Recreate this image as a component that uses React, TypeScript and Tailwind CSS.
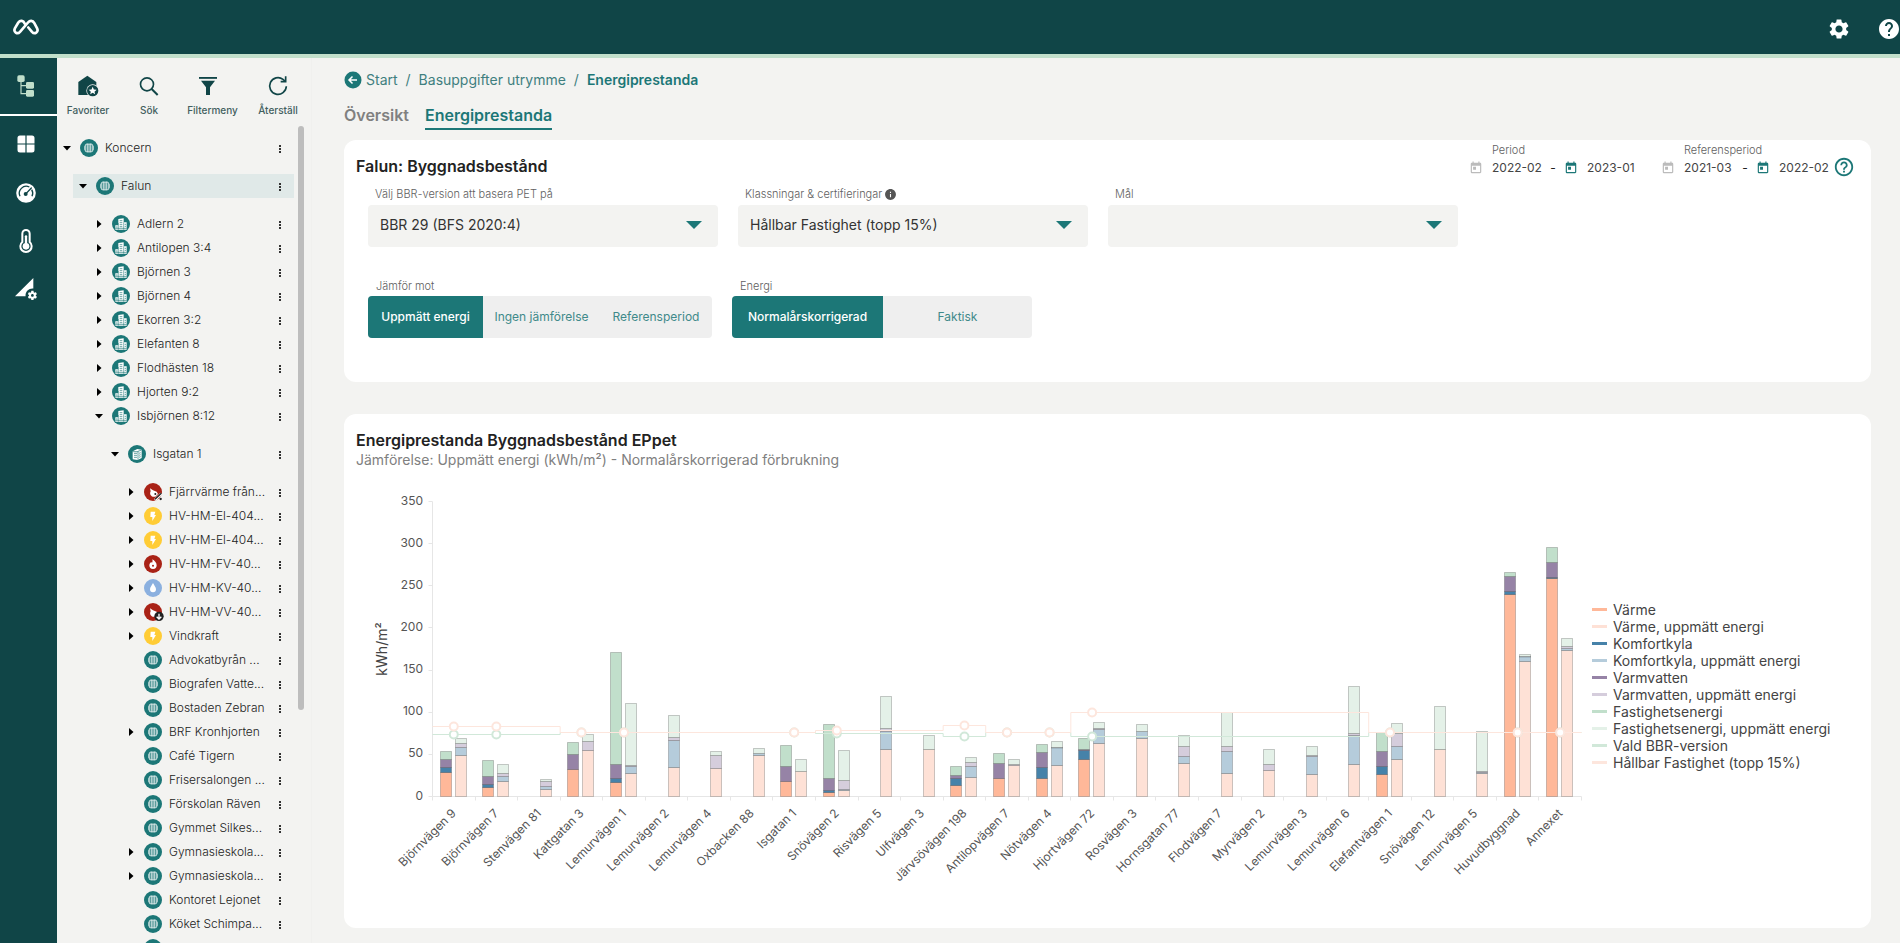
import React from 'react';
import { MdSettings, MdHelp, MdToday, MdPermDataSetting, MdInfo, MdHelpOutline } from 'react-icons/md';

type IconKind = 'globe' | 'estate' | 'building' | 'heatShare' | 'power' | 'heat' | 'water' | 'heatDown';

interface TreeItem {
  name: string;
  icon: IconKind;
  open?: boolean;
  leaf?: boolean;
  selected?: boolean;
  children?: TreeItem[];
}

interface Building {
  name: string;
  // stacked levels in kWh/m²: heat, cooling, hot water, property energy
  corrected?: number[];
  measured: number[];
}

const isgatan: TreeItem[] = [
  { name: 'Fjärrvärme från...', icon: 'heatShare' },
  { name: 'HV-HM-El-404...', icon: 'power' },
  { name: 'HV-HM-El-404...', icon: 'power' },
  { name: 'HV-HM-FV-40...', icon: 'heat' },
  { name: 'HV-HM-KV-40...', icon: 'water' },
  { name: 'HV-HM-VV-40...', icon: 'heatDown' },
  { name: 'Vindkraft', icon: 'power' },
  { name: 'Advokatbyrån ...', icon: 'globe', leaf: true },
  { name: 'Biografen Vatte...', icon: 'globe', leaf: true },
  { name: 'Bostaden Zebran', icon: 'globe', leaf: true },
  { name: 'BRF Kronhjorten', icon: 'globe' },
  { name: 'Café Tigern', icon: 'globe', leaf: true },
  { name: 'Frisersalongen ...', icon: 'globe', leaf: true },
  { name: 'Förskolan Räven', icon: 'globe', leaf: true },
  { name: 'Gymmet Silkes...', icon: 'globe', leaf: true },
  { name: 'Gymnasieskola...', icon: 'globe' },
  { name: 'Gymnasieskola...', icon: 'globe' },
  { name: 'Kontoret Lejonet', icon: 'globe', leaf: true },
  { name: 'Köket Schimpa...', icon: 'globe', leaf: true },
  { name: '', icon: 'globe', leaf: true },
];

const tree: TreeItem[] = [
  {
    name: 'Koncern',
    icon: 'globe',
    open: true,
    children: [
      {
        name: 'Falun',
        icon: 'globe',
        open: true,
        selected: true,
        children: [
          { name: 'Adlern 2', icon: 'estate' },
          { name: 'Antilopen 3:4', icon: 'estate' },
          { name: 'Björnen 3', icon: 'estate' },
          { name: 'Björnen 4', icon: 'estate' },
          { name: 'Ekorren 3:2', icon: 'estate' },
          { name: 'Elefanten 8', icon: 'estate' },
          { name: 'Flodhästen 18', icon: 'estate' },
          { name: 'Hjorten 9:2', icon: 'estate' },
          {
            name: 'Isbjörnen 8:12',
            icon: 'estate',
            open: true,
            children: [{ name: 'Isgatan 1', icon: 'building', open: true, children: isgatan }],
          },
        ],
      },
    ],
  },
];

const buildings: Building[] = [
  { name: 'Björnvägen 9', corrected: [28, 34, 43.5, 53.4], measured: [48.6, 58, 63, 69] },
  { name: 'Björnvägen 7', corrected: [10.7, 13.8, 23.3, 42.7], measured: [17.8, 23.3, 27.3, 38] },
  { name: 'Stenvägen 81', measured: [8.3, 11.5, 17.8, 20.2] },
  { name: 'Kattgatan 3', corrected: [32, 32, 49.4, 64], measured: [54.6, 54.6, 65, 73.5] },
  { name: 'Lemurvägen 1', corrected: [16.6, 21, 37.6, 170.8], measured: [27.3, 35.6, 36.8, 110.3] },
  { name: 'Lemurvägen 2', measured: [34.4, 66.4, 70, 96] },
  { name: 'Lemurvägen 4', measured: [33.2, 33.2, 48.6, 53.4] },
  { name: 'Oxbacken 88', measured: [48.6, 51, 51, 57] },
  { name: 'Isgatan 1', corrected: [17.8, 17.8, 35.2, 60.5], measured: [29.7, 29.7, 29.7, 43.9] },
  { name: 'Snövägen 2', corrected: [4.7, 6.7, 21, 85.4], measured: [7.1, 8.3, 19, 54.6] },
  { name: 'Risvägen 5', measured: [55.8, 77.5, 80.3, 118.6] },
  { name: 'Ulfvägen 3', measured: [55.8, 55.8, 55.8, 72.4] },
  { name: 'Järvsövägen 198', corrected: [13, 21.4, 24.5, 35.6], measured: [22.5, 35.6, 40.3, 46.3] },
  { name: 'Antilopvägen 7', corrected: [21, 21, 38.8, 51], measured: [36.8, 36.8, 37.6, 43.9] },
  { name: 'Nötvägen 4', corrected: [21, 34.4, 51.8, 61.7], measured: [36.8, 58, 58.6, 65.2] },
  { name: 'Hjortvägen 72', corrected: [43.9, 54.6, 55.4, 68.8], measured: [62.9, 79.5, 80.3, 87.8] },
  { name: 'Rosvägen 3', measured: [68.8, 77.1, 77.1, 85.4] },
  { name: 'Hornsgatan 77', measured: [38.8, 47.4, 59.3, 72.4] },
  { name: 'Flodvägen 7', measured: [27.3, 53.4, 59.3, 99.6] },
  { name: 'Myrvägen 2', measured: [30.8, 30.8, 38, 55.8] },
  { name: 'Lemurvägen 3', measured: [26.1, 47.4, 48.2, 59.3] },
  { name: 'Lemurvägen 6', measured: [38, 72.4, 74.7, 130.5] },
  { name: 'Elefantvägen 1', corrected: [26.1, 35.6, 53.4, 75.9], measured: [43.9, 59.3, 74.7, 86.6] },
  { name: 'Snövägen 12', measured: [55.8, 55.8, 55.8, 106.8] },
  { name: 'Lemurvägen 5', measured: [27.3, 28.5, 29.7, 77.1] },
  { name: 'Huvudbyggnad', corrected: [239.6, 243.2, 260.6, 265.7], measured: [160.1, 166, 166.6, 168.4] },
  { name: 'Annexet', corrected: [258.2, 259.4, 277.2, 295.4], measured: [173.2, 176, 178, 187.4] },
];

// [number of buildings, level]
const bbrSteps: [number, number][] = [[3, 73.5], [6, 76], [3, 75], [1, 71.6], [2, 76], [7, 71.2], [5, 76]];
const sustainableSteps: [number, number][] = [[3, 83], [6, 76.3], [3, 78.7], [1, 84.2], [2, 76.3], [7, 99.2], [5, 76.3]];

const correctedColors = ['#ffb899', '#4682a9', '#9683a6', '#c1dfcb'];
const measuredColors = ['#fee1d6', '#b5ccdb', '#d5cddc', '#e4f1e8'];

const legend = [
  { label: 'Värme', color: 'bg-[#ffb899]' },
  { label: 'Värme, uppmätt energi', color: 'bg-[#fee1d6]' },
  { label: 'Komfortkyla', color: 'bg-[#4682a9]' },
  { label: 'Komfortkyla, uppmätt energi', color: 'bg-[#b5ccdb]' },
  { label: 'Varmvatten', color: 'bg-[#9683a6]' },
  { label: 'Varmvatten, uppmätt energi', color: 'bg-[#d5cddc]' },
  { label: 'Fastighetsenergi', color: 'bg-[#c1dfcb]' },
  { label: 'Fastighetsenergi, uppmätt energi', color: 'bg-[#e4f1e8]' },
  { label: 'Vald BBR-version', color: 'bg-[#d1e8d9]' },
  { label: 'Hållbar Fastighet (topp 15%)', color: 'bg-[#fde6dd]' },
];

const Logo = () => (
  <svg className="h-4 w-[26px]" viewBox="0 0 78 47" fill="none" stroke="#fff" strokeWidth="8" strokeLinecap="round" strokeLinejoin="round">
    <path d="M35 13C31 4 22 2 16 10L6 27C0 39 13 47 21 38L45 10C51 3 59 3 64 12L72 27C78 39 65 47 57 38L46 25" />
  </svg>
);

const TreeNavIcon = () => (
  <svg className="h-[22px] w-[18px]" viewBox="0 0 54 66" fill="#c1dfcb">
    <rect x="1" y="1" width="22" height="20" rx="5" />
    <rect x="27" y="21" width="24" height="20" rx="4" />
    <rect x="27" y="45" width="24" height="20" rx="4" />
    <path d="M12 20V56H29M12 32H29" fill="none" stroke="#c1dfcb" strokeWidth="3.5" />
  </svg>
);

const GridNavIcon = () => (
  <svg className="h-[18px] w-[18px]" viewBox="0 0 18 18" fill="#fff">
    <path d="M3 .5H8.400V8.400H.5V3A2.500 2.500 0 0 1 3 .5ZM9.600 .5H15A2.500 2.500 0 0 1 17.500 3V8.400H9.600ZM.5 9.600H8.400V17.500H3A2.500 2.500 0 0 1 .5 15ZM9.600 9.600H17.500V15A2.500 2.500 0 0 1 15 17.500H9.600Z" />
  </svg>
);

const GaugeNavIcon = () => (
  <svg className="h-5 w-5" viewBox="0 0 60 60" fill="none">
    <circle cx="30" cy="30" r="29.500" fill="#fff" />
    <path d="M12 40A21 21 0 0 1 40 12M47 20A21 21 0 0 1 48 40" stroke="#104547" strokeWidth="4" />
    <path d="M30 32L46 15" stroke="#104547" strokeWidth="4" strokeLinecap="round" />
    <circle cx="29" cy="33" r="6" fill="#104547" />
  </svg>
);

const ThermometerNavIcon = () => (
  <svg className="h-6 w-[14px]" viewBox="0 0 42 72" fill="none">
    <path d="M10 14A11 11 0 0 1 32 14V39A17 17 0 1 1 10 39Z" stroke="#fff" strokeWidth="6" />
    <path d="M21 22V50" stroke="#fff" strokeWidth="7" strokeLinecap="round" />
    <circle cx="21" cy="52" r="10" fill="#fff" />
  </svg>
);

const FavouriteIcon = () => (
  <svg className="h-[22px] w-[22px]" viewBox="0 0 66 66">
    <path d="M4 21L31 2L58 21V60H4Z" fill="#104547" />
    <circle cx="47" cy="47" r="19" fill="#f3f3f1" />
    <circle cx="47" cy="47" r="17" fill="#104547" />
    <path d="M47 35L50.500 43.500L59 44.500L52.500 50L54.500 58L47 53.500L39.500 58L41.500 50L35 44.500L43.500 43.500Z" fill="#fff" />
  </svg>
);

const SearchIcon = () => (
  <svg className="h-[22px] w-[22px]" viewBox="0 0 66 66" fill="none" stroke="#104547" strokeWidth="5">
    <circle cx="27" cy="28" r="19.500" />
    <path d="M41 42L59 60" strokeWidth="6" />
  </svg>
);

// the funnel sits left of the middle of its label
const FilterIcon = () => (
  <svg className="h-[22px] w-8" viewBox="0 0 96 66" fill="#104547">
    <rect x="6" y="6" width="54" height="5.500" />
    <path d="M12 17H54L39 37V60H27V37Z" />
  </svg>
);

const ResetIcon = () => (
  <svg className="h-[22px] w-[22px]" viewBox="0 0 66 66" fill="none" stroke="#104547" strokeWidth="5">
    <path d="M58 34A25 25 0 1 1 48 13L55 19" />
    <path d="M56 4V20H41" />
  </svg>
);

const nodeColors: Record<IconKind, string> = {
  globe: '#1c7777',
  estate: '#1c7777',
  building: '#1c7777',
  heatShare: '#a92216',
  heat: '#a92216',
  heatDown: '#a92216',
  power: '#ffcc35',
  water: '#8bb0df',
};

const NodeIcon = ({ kind }: { kind: IconKind }) => (
  <svg className="h-[18px] w-[18px] shrink-0 overflow-visible" viewBox="0 0 54 54">
    <circle cx="27" cy="27" r="27" fill={nodeColors[kind]} />
    {kind === 'globe' && (
      <g>
        <circle cx="27" cy="27" r="15" fill="#fff" />
        <g fill="none" stroke="#1c7777" strokeWidth="2">
          <ellipse cx="27" cy="27" rx="8" ry="15" />
          <path d="M27 12V42M13 21H41M12 27H42M13 33H41" />
        </g>
      </g>
    )}
    {kind === 'estate' && (
      <g>
        <path d="M19 12L35 10V44H19ZM35 22H44V44H35ZM10 31H19V44H10Z" fill="#fff" />
        <path d="M23 17H31M23 23H31M23 29H31M23 35H31M38 28H42M38 34H42M12 36H17M10 40H44" stroke="#1c7777" strokeWidth="2" />
        <path d="M19 24V44M35 22V44" stroke="#1c7777" strokeWidth="1.500" />
      </g>
    )}
    {kind === 'building' && (
      <g>
        <path d="M14 19L28 12L41 14V39L29 45L14 43Z" fill="#fff" />
        <path d="M30 19V44M30 19L41 15M14 20L30 20M18 25H27M18 31H27M18 37H27M33 25L38 23M33 31L38 29M33 37L38 35" stroke="#1c7777" strokeWidth="2" />
      </g>
    )}
    {kind === 'power' && <path d="M20 14H34L31 24H36L25 42V30H19Z" fill="#fff" />}
    {kind === 'water' && <path d="M27 12C31 20 36 25 36 31A9 9 0 0 1 18 31C18 25 23 20 27 12Z" fill="#fff" />}
    {kind === 'heat' && (
      <g>
        <path d="M25 13C31 17 38 23 38 31A11 11 0 0 1 16 31C16 26 19 22 22 21L24 24C26 21 26 17 25 13Z" fill="#fff" />
        <circle cx="27" cy="32" r="3" fill="#a92216" />
      </g>
    )}
    {(kind === 'heatShare' || kind === 'heatDown') && (
      <path d="M18 16L27 22L38 26L42 33L34 41H26C18 38 17 30 20 25Z" fill="#fff" />
    )}
    {kind === 'heatShare' && (
      <g>
        <path d="M33 51L52 32" stroke="#fff" strokeWidth="8" />
        <path d="M33 49L52 31" stroke="#222" strokeWidth="4" />
        <circle cx="34" cy="33" r="3" fill="#222" />
        <circle cx="50" cy="48" r="3.500" fill="#222" />
      </g>
    )}
    {kind === 'heatDown' && (
      <g>
        <circle cx="45" cy="40" r="14" fill="#222" />
        <path d="M45 32V47M38 41L45 48L52 41" fill="none" stroke="#fff" strokeWidth="4" />
      </g>
    )}
  </svg>
);

const Caret = ({ open }: { open?: boolean }) => (
  <svg className="h-2 w-2" viewBox="0 0 8 8" fill="#000">
    {open ? <path d="M0 2H8L4 6.500Z" /> : <path d="M2 0L6.500 4L2 8Z" />}
  </svg>
);

const TreeNode = ({ item }: { item: TreeItem }) => (
  <li>
    <div className={item.selected ? 'flex h-6 items-center bg-[#e0e9e8] pl-1' : 'flex h-6 items-center pl-1'}>
      <button type="button" aria-label={`Visa ${item.name}`} className="flex w-3 shrink-0 justify-center">
        {!item.leaf && <Caret open={item.open} />}
      </button>
      <a href="#" className="ml-[7px] flex min-w-0 flex-1 items-center gap-[7px] text-xs font-light text-[#222]">
        <NodeIcon kind={item.icon} />
        <span className="whitespace-nowrap">{item.name}</span>
      </a>
      <button type="button" aria-label={`Meny ${item.name}`} className="mr-2 flex w-3 shrink-0 justify-center pt-0.5">
        <svg className="h-2 w-0.5" viewBox="0 0 2 8" fill="#333">
          <path d="M0 0H2V2H0ZM0 3H2V5H0ZM0 6H2V8H0Z" />
        </svg>
      </button>
    </div>
    {item.children && (
      <ul className="pt-[14px] pl-4">
        {item.children.map((child, i) => (
          <TreeNode key={i} item={child} />
        ))}
      </ul>
    )}
  </li>
);

const ToolButton = ({ label, children }: { label: string; children: React.ReactNode }) => (
  <button type="button" className="flex flex-col items-center gap-[5px] text-[10px] leading-4 font-medium text-[#42605f]">
    {children}
    {label}
  </button>
);

const SelectField = ({ id, label, value, info }: { id: string; label: string; value: string; info?: boolean }) => (
  <div className="flex max-w-[350px] flex-1 flex-col gap-[3px]">
    <label htmlFor={id} className="flex items-center gap-0.5 pl-[7px] text-[11px] leading-4 font-light text-[#606060]">
      {label}
      {info && <MdInfo className="h-[13px] w-[13px] text-[#555]" />}
    </label>
    <div className="relative">
      <select id={id} defaultValue={value} className="h-[42px] w-full appearance-none rounded bg-[#f3f3f1] pr-10 pb-0.5 pl-3 text-sm text-[#333]">
        <option value={value}>{value}</option>
      </select>
      <svg className="pointer-events-none absolute top-4 right-4 h-2 w-4" viewBox="0 0 16 8" fill="#1c7777">
        <path d="M0 0H16L8 8Z" />
      </svg>
    </div>
  </div>
);

const DateField = ({ label, value, disabled }: { label: string; value: string; disabled?: boolean }) => (
  <div className="flex items-center gap-[9px]">
    <MdToday className={disabled ? 'h-[14px] w-[14px] text-[#bbb]' : 'h-[14px] w-[14px] text-[#1c7777]'} />
    <input type="text" aria-label={label} defaultValue={value} className="h-4 w-[50px] bg-transparent text-xs text-[#444]" />
  </div>
);

const PeriodField = ({ label, from, to }: { label: string; from: string; to: string }) => (
  <fieldset>
    <legend className="pl-[23px] text-[11px] leading-4 font-light text-[#606060]">{label}</legend>
    <div className="mt-0.5 flex items-center text-xs">
      <DateField label={`${label} från`} value={from} disabled />
      <span className="w-[22px] text-center leading-4">-</span>
      <DateField label={`${label} till`} value={to} />
    </div>
  </fieldset>
);

const PLOT = { left: 76.5, right: 1225.5, top: 21.5, bottom: 316.5 };
const band = (PLOT.right - PLOT.left) / buildings.length;
const yOf = (v: number) => PLOT.bottom - (v / 350) * (PLOT.bottom - PLOT.top);
const snap = (v: number) => Math.floor(yOf(v)) + 0.5;
const center = (i: number) => PLOT.left + band * (i + 0.5);

const Stack = ({ x, levels, colors }: { x: number; levels: number[]; colors: string[] }) => (
  <g stroke="#000" strokeOpacity="0.2">
    {levels.map((level, i) => {
      const base = i === 0 ? 0 : levels[i - 1];
      if (level <= base) return null;
      const top = snap(level);
      const bottom = snap(base);
      return <rect key={i} x={x} y={top} width={11} height={Math.max(bottom - top, 0.5)} fill={colors[i]} />;
    })}
  </g>
);

const stepPath = (steps: [number, number][]) => {
  let x = PLOT.left;
  let d = '';
  steps.forEach(([count, level], i) => {
    const y = snap(level);
    d += i === 0 ? `M${x} ${y}` : `V${y}`;
    x += count * band;
    d += `H${x}`;
  });
  return d;
};

const levelAt = (steps: [number, number][], index: number) => {
  let n = 0;
  for (const [count, level] of steps) {
    n += count;
    if (index < n) return level;
  }
  return 0;
};

const StepLine = ({ steps, color }: { steps: [number, number][]; color: string }) => (
  <g stroke={color} fill="none">
    <path d={stepPath(steps)} strokeWidth="1" />
    {buildings.map((b, i) =>
      b.corrected ? (
        <circle key={i} cx={center(i)} cy={snap(levelAt(steps, i))} r="4" fill="#fff" strokeWidth="2" />
      ) : null
    )}
  </g>
);

const EnergyChart = () => (
  <svg className="h-auto min-w-0 flex-1 self-start" viewBox="0 0 1228 436" role="img" aria-label="Energiprestanda per byggnad">
    <g stroke="#e6e6e6">
      <path d={`M${PLOT.left} ${PLOT.top}V${PLOT.bottom}H${PLOT.right}`} fill="none" />
      {[0, 50, 100, 150, 200, 250, 300, 350].map((v) => (
        <path key={v} d={`M${PLOT.left - 4} ${snap(v)}H${PLOT.left}`} />
      ))}
      {Array.from({ length: buildings.length + 1 }, (_, i) => (
        <path key={i} d={`M${Math.floor(PLOT.left + band * i) + 0.5} ${PLOT.bottom}V${PLOT.bottom + 4}`} />
      ))}
    </g>
    <g fontSize="12" fill="#555" textAnchor="end">
      {[0, 50, 100, 150, 200, 250, 300, 350].map((v) => (
        <text key={v} x="67" y={Math.round(yOf(v)) + 3}>
          {v}
        </text>
      ))}
      {buildings.map((b, i) => (
        <text key={i} transform={`translate(${center(i) + 3} 334) rotate(-45)`}>
          {b.name}
        </text>
      ))}
    </g>
    <text transform="translate(31 169) rotate(-90)" fontSize="14" fill="#444" textAnchor="middle">
      kWh/m²
    </text>
    {buildings.map((b, i) => {
      const x = Math.round(center(i) - 14) + 0.5;
      return (
        <g key={i}>
          {b.corrected && <Stack x={x} levels={b.corrected} colors={correctedColors} />}
          <Stack x={x + 15} levels={b.measured} colors={measuredColors} />
        </g>
      );
    })}
    <StepLine steps={bbrSteps} color="#d1e8d9" />
    <StepLine steps={sustainableSteps} color="#fde6dd" />
  </svg>
);

const App: React.FC = () => (
  <div className="flex h-screen flex-col overflow-hidden bg-[#f3f3f1] font-[Inter,'Liberation_Sans',sans-serif] text-[#222]">
    <header className="flex h-[58px] shrink-0 items-center justify-between border-b-4 border-[#c1dfcb] bg-[#104547] pl-[13px]">
      <a href="#" aria-label="Startsida">
        <Logo />
      </a>
      <div className="flex items-center gap-[26px] pt-1 text-white">
        <button type="button" aria-label="Inställningar">
          <MdSettings className="h-6 w-6" />
        </button>
        <button type="button" aria-label="Hjälp" className="-mr-px">
          <MdHelp className="h-6 w-6" />
        </button>
      </div>
    </header>

    <div className="flex min-h-0 flex-1">
      <nav className="flex w-[57px] shrink-0 flex-col bg-[#104547] text-white">
        <a href="#" aria-label="Träd" className="mb-1 flex h-[58px] items-center justify-center border-b-2 border-white pr-[5px]">
          <TreeNavIcon />
        </a>
        <a href="#" aria-label="Översikt" className="flex h-12 items-center justify-center pr-[5px]">
          <GridNavIcon />
        </a>
        <a href="#" aria-label="Mätare" className="flex h-12 items-center justify-center pt-0.5 pr-[5px]">
          <GaugeNavIcon />
        </a>
        <a href="#" aria-label="Temperatur" className="flex h-12 items-center justify-center pt-0.5 pr-[5px]">
          <ThermometerNavIcon />
        </a>
        <a href="#" aria-label="Datainställningar" className="flex h-12 items-center justify-center pt-0.5 pr-[5px]">
          <MdPermDataSetting className="h-[22px] w-[22px]" />
        </a>
      </nav>

      <aside className="flex w-[255px] shrink-0 flex-col border-r border-[#f0f0ee]">
        <div className="grid h-[68px] shrink-0 grid-cols-[62px_60px_67px_64px] items-start pt-[17px]">
          <ToolButton label="Favoriter">
            <FavouriteIcon />
          </ToolButton>
          <ToolButton label="Sök">
            <SearchIcon />
          </ToolButton>
          <ToolButton label="Filtermeny">
            <FilterIcon />
          </ToolButton>
          <ToolButton label="Återställ">
            <ResetIcon />
          </ToolButton>
        </div>
        <div className="flex min-h-0 flex-1 gap-1 overflow-hidden">
          <ul className="w-[237px] pt-2.5">
            {tree.map((item) => (
              <TreeNode key={item.name} item={item} />
            ))}
          </ul>
          <div className="h-[584px] w-1.5 rounded-full bg-[#bdbdbd]" />
        </div>
      </aside>

      <main className="min-w-0 flex-1 overflow-hidden pt-3 pr-[29px] pl-8">
        <div className="flex h-5 items-center gap-2 text-sm text-[#3f7f7f]">
          <a href="#" className="flex items-center gap-1">
            <svg className="h-[18px] w-[18px]" viewBox="0 0 18 18" fill="none">
              <circle cx="9" cy="9" r="8.500" fill="#1c7777" />
              <path d="M13 9H5.500M8.500 5.500L5 9L8.500 12.500" stroke="#fff" strokeWidth="1.500" />
            </svg>
            Start
          </a>
          <span>/</span>
          <a href="#">Basuppgifter utrymme</a>
          <span>/</span>
          <a href="#" className="font-semibold text-[#1c7777]">
            Energiprestanda
          </a>
        </div>

        <div className="mt-[13px] flex gap-4 font-semibold">
          <a href="#" className="pb-px text-[#808080]">
            Översikt
          </a>
          <a href="#" className="border-b-2 border-[#1c7777] pb-px text-[#1c7777]">
            Energiprestanda
          </a>
        </div>

        <section className="mt-2.5 rounded-xl bg-white pr-4 pb-11 pl-3">
          <div className="flex items-start justify-between">
            <h2 className="pt-[14px] font-semibold">Falun: Byggnadsbestånd</h2>
            <div className="flex items-start pt-0.5">
              <div className="flex gap-6">
                <PeriodField label="Period" from="2022-02" to="2023-01" />
                <PeriodField label="Referensperiod" from="2021-03" to="2022-02" />
              </div>
              <button type="button" aria-label="Hjälp om perioder" className="mt-[14px] ml-1">
                <MdHelpOutline className="h-[22px] w-[22px] text-[#1c7777]" />
              </button>
            </div>
          </div>

          <div className="mt-2 flex gap-5 pl-3">
            <SelectField id="bbr" label="Välj BBR-version att basera PET på" value="BBR 29 (BFS 2020:4)" />
            <SelectField id="class" label="Klassningar & certifieringar" value="Hållbar Fastighet (topp 15%)" info />
            <SelectField id="goal" label="Mål" value="" />
          </div>

          <div className="mt-[31px] flex gap-5 pl-3 text-xs">
            <div className="flex flex-col gap-0.5">
              <span className="pl-2 text-[11px] leading-4 font-light text-[#606060]">Jämför mot</span>
              <div className="flex h-[42px] overflow-hidden rounded bg-[#efefef] text-[#3f8a8a]">
                <button type="button" className="w-[115px] bg-[#1c7777] font-medium text-white">
                  Uppmätt energi
                </button>
                <button type="button" className="w-[117px]">
                  Ingen jämförelse
                </button>
                <button type="button" className="w-[112px]">
                  Referensperiod
                </button>
              </div>
            </div>
            <div className="flex flex-col gap-0.5">
              <span className="pl-2 text-[11px] leading-4 font-light text-[#606060]">Energi</span>
              <div className="flex h-[42px] overflow-hidden rounded bg-[#efefef] text-[#3f8a8a]">
                <button type="button" className="w-[151px] bg-[#1c7777] font-medium text-white">
                  Normalårskorrigerad
                </button>
                <button type="button" className="w-[149px]">
                  Faktisk
                </button>
              </div>
            </div>
          </div>
        </section>

        <section className="mt-8 rounded-xl bg-white px-3 pt-[14px] pb-3">
          <h2 className="font-semibold">Energiprestanda Byggnadsbestånd EPpet</h2>
          <p className="text-sm leading-4 text-[#808080]">Jämförelse: Uppmätt energi (kWh/m²) - Normalårskorrigerad förbrukning</p>
          <div className="mt-3 flex gap-2">
            <EnergyChart />
            <ul className="w-[267px] shrink-0 pt-[121px] text-sm leading-[17px] text-[#444]">
              {legend.map((entry) => (
                <li key={entry.label} className="flex items-center gap-1.5">
                  <span className={`h-[3px] w-[15px] ${entry.color}`} />
                  {entry.label}
                </li>
              ))}
            </ul>
          </div>
        </section>
      </main>
    </div>
  </div>
);

export default App;
